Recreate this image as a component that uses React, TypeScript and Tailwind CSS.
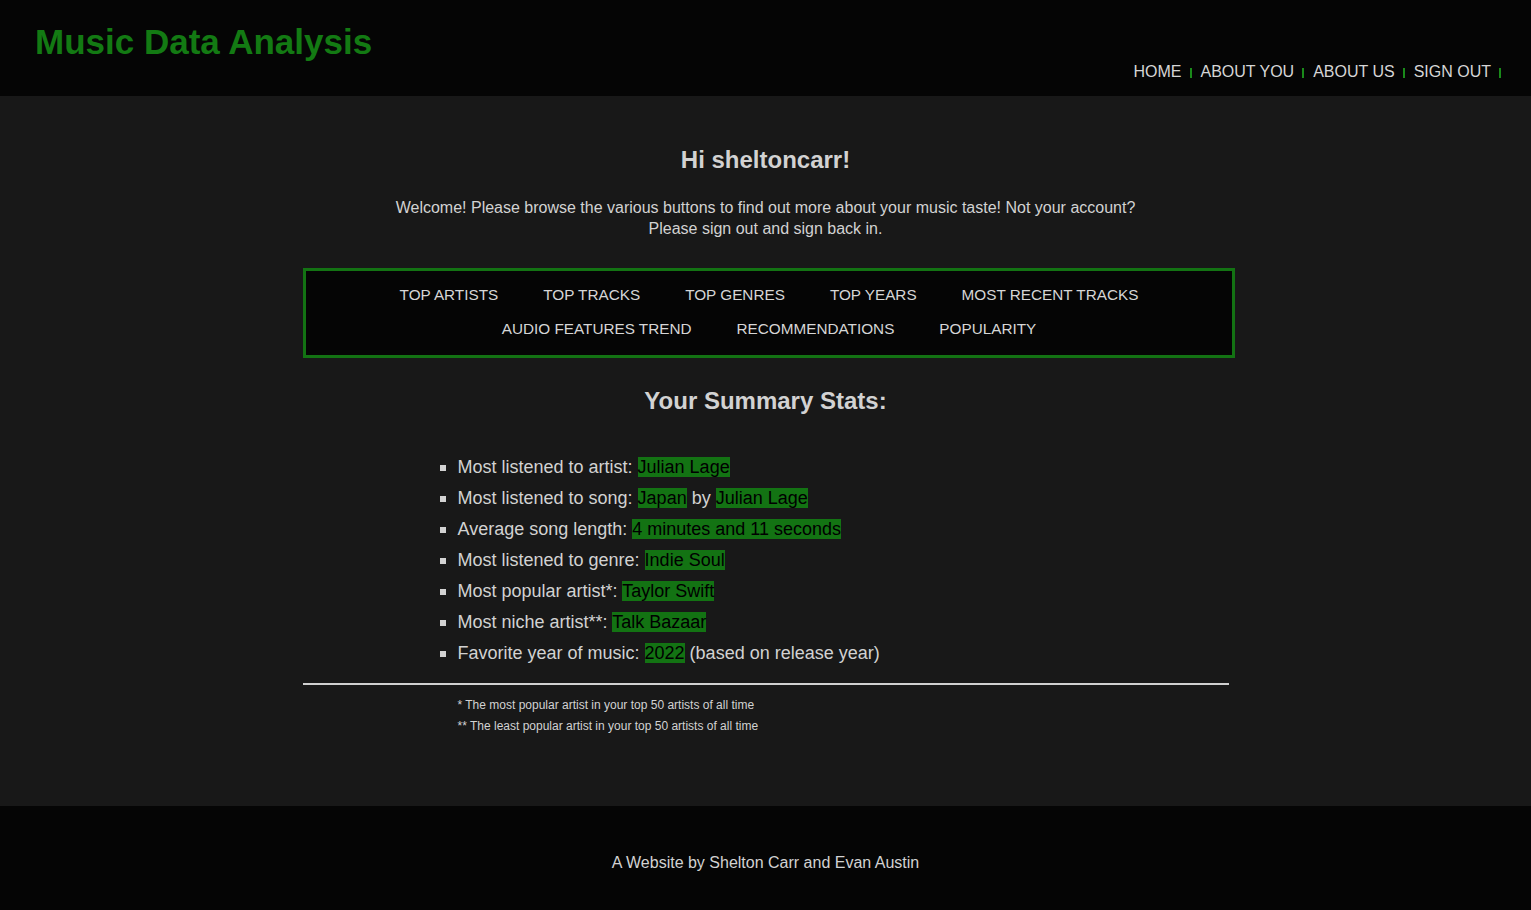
import React from 'react';

const navLinks = ['HOME', 'ABOUT YOU', 'ABOUT US', 'SIGN OUT'];

const buttonRows = [
  ['TOP ARTISTS', 'TOP TRACKS', 'TOP GENRES', 'TOP YEARS', 'MOST RECENT TRACKS'],
  ['AUDIO FEATURES TREND', 'RECOMMENDATIONS', 'POPULARITY'],
];

function Hl({ children }: { children: React.ReactNode }) {
  return <span className="bg-[#137313] text-black">{children}</span>;
}

export default function App() {
  return (
    <div
      className="min-h-screen flex flex-col bg-[#181818] text-[#d2d2d2]"
      style={{ fontFamily: '"Liberation Sans", Arial, sans-serif' }}
    >
      {/* Header */}
      <header className="h-[96px] bg-[#050505] flex justify-between pl-[35px] pr-[21px] shrink-0">
        <h1 className="text-[35px] font-bold text-[#137a13] leading-none pt-[24px]">
          Music Data Analysis
        </h1>
        <nav className="flex items-end pb-[16px] text-[16px] text-[#d6d6d6]">
          {navLinks.map((l) => (
            <div key={l} className="flex items-center">
              <a className="leading-none">{l}</a>
              <span className="w-[2px] h-[10px] bg-[#1a8a1a] ml-[8px] mr-[9px] mt-[2px]" />
            </div>
          ))}
        </nav>
      </header>

      {/* Main */}
      <main className="h-[710px] shrink-0 flex flex-col items-center">
        <h2 className="text-[24px] font-bold mt-[50px] leading-[28px]">Hi sheltoncarr!</h2>
        <p className="text-[16px] leading-[21px] text-center w-[760px] mt-[23px]">
          Welcome! Please browse the various buttons to find out more about your music taste! Not your
          account? Please sign out and sign back in.
        </p>

        <div className="w-[932px] ml-[7px] mt-[29px] border-[3px] border-[#137313] bg-[#050505] pt-[15px] pb-[17px] flex flex-col items-center gap-[16px]">
          {buttonRows.map((row, i) => (
            <div key={i} className="flex gap-[45px] text-[15.3px] leading-[18px] text-[#d6d6d6]">
              {row.map((b) => (
                <a key={b}>{b}</a>
              ))}
            </div>
          ))}
        </div>

        <h2 className="text-[24px] font-bold mt-[29px] leading-[28px]">Your Summary Stats:</h2>

        <div className="w-[932px]">
          <ul className="pl-[140px] mt-[37px] text-[18px] leading-[31px]">
            {[
              <>Most listened to artist: <Hl>Julian Lage</Hl></>,
              <>Most listened to song: <Hl>Japan</Hl> by <Hl>Julian Lage</Hl></>,
              <>Average song length: <Hl>4 minutes and 11 seconds</Hl></>,
              <>Most listened to genre: <Hl>Indie Soul</Hl></>,
              <>Most popular artist*: <Hl>Taylor Swift</Hl></>,
              <>Most niche artist**: <Hl>Talk Bazaar</Hl></>,
              <>Favorite year of music: <Hl>2022</Hl> (based on release year)</>,
            ].map((c, i) => (
              <li key={i} className="flex items-center">
                <span className="w-[6px] h-[6px] bg-[#d2d2d2] mr-[12px]" />
                <span>{c}</span>
              </li>
            ))}
          </ul>
        </div>

        <hr className="w-[926px] border-0 h-[2px] bg-[#d0d0d0] mt-[14px]" />

        <div className="w-[932px] pl-[158px] mt-[10px] text-[12px] leading-[21px]">
          <p>* The most popular artist in your top 50 artists of all time</p>
          <p>** The least popular artist in your top 50 artists of all time</p>
        </div>
      </main>

      {/* Footer */}
      <footer className="h-[104px] bg-[#050505] flex justify-center shrink-0">
        <p className="text-[16px] leading-[18px] pt-[48px] text-[#d2d2d2]">
          A Website by Shelton Carr and Evan Austin
        </p>
      </footer>
    </div>
  );
}
